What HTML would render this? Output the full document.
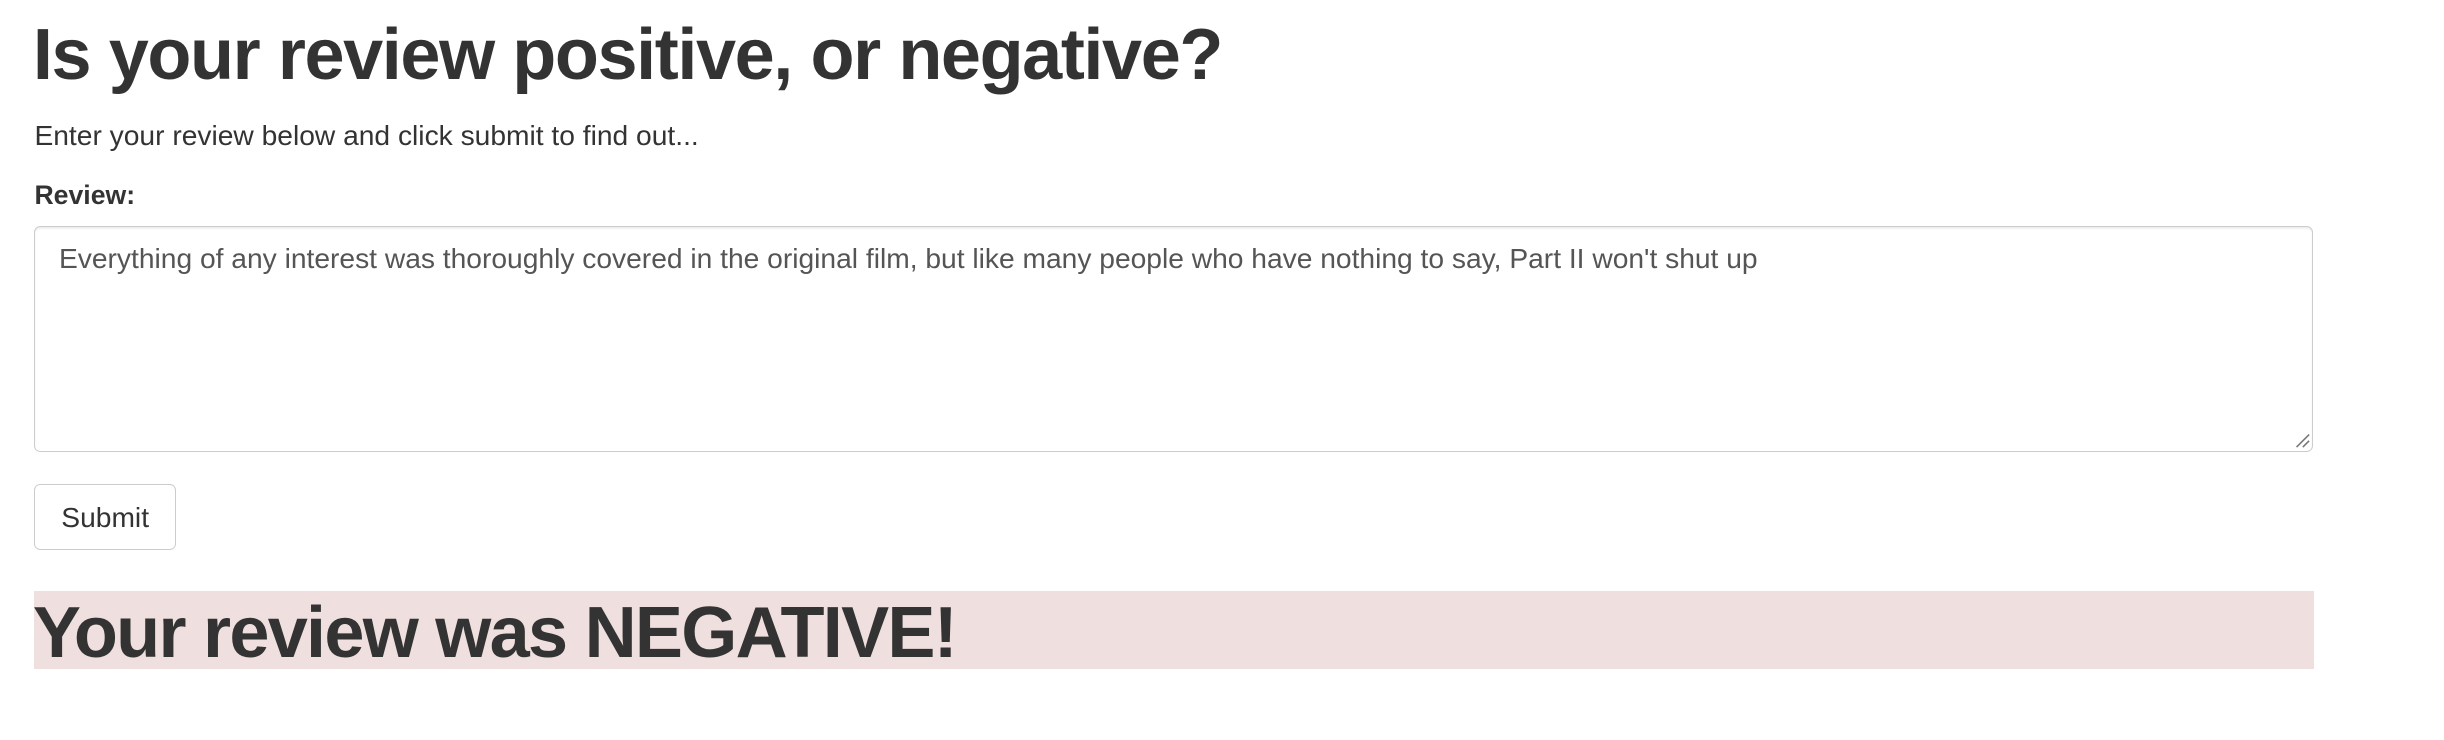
<!DOCTYPE html>
<html><head><meta charset="utf-8"><style>
html,body{margin:0;padding:0;background:#fff;width:2444px;height:740px;overflow:hidden}
#w{zoom:1.5667;position:relative;width:1560px;height:472px;font-family:"Liberation Sans",Arial,sans-serif;color:#333}
.a{position:absolute;white-space:nowrap;line-height:1}
h1{margin:0;font-size:46px;font-weight:bold;letter-spacing:-0.9px}
#ta{position:absolute;left:22px;top:144px;width:1453px;height:143px;border:1px solid #ccc;border-radius:4px;box-shadow:inset 0 1px 1px rgba(0,0,0,.075)}
#btn{position:absolute;left:22px;top:309px;width:89px;height:41px;border:1px solid #ccc;border-radius:4px;font-size:18px;text-align:center;line-height:41px}
#res{position:absolute;left:22px;top:377px;width:1455px;height:50px;background:#efdfdf}
</style></head><body><div id="w">
<h1 class="a" style="left:21px;top:12px">Is your review positive, or negative?</h1>
<div class="a" style="left:22px;top:77px;font-size:18px">Enter your review below and click submit to find out...</div>
<div class="a" style="left:22px;top:116px;font-size:17px;font-weight:bold">Review:</div>
<div id="ta"><div class="a" style="left:15px;top:11px;font-size:18px;color:#555">Everything of any interest was thoroughly covered in the original film, but like many people who have nothing to say, Part II won't shut up</div>
<svg style="position:absolute;right:1px;bottom:1px" width="10" height="10"><path d="M1 9L9 1M5 9L9 5" stroke="#777" stroke-width="1"/></svg></div>
<div id="btn">Submit</div>
<div id="res"><div class="a" style="left:-1px;top:4px;font-size:46px;font-weight:bold;letter-spacing:-1.1px">Your review was NEGATIVE!</div></div>
</div></body></html>
